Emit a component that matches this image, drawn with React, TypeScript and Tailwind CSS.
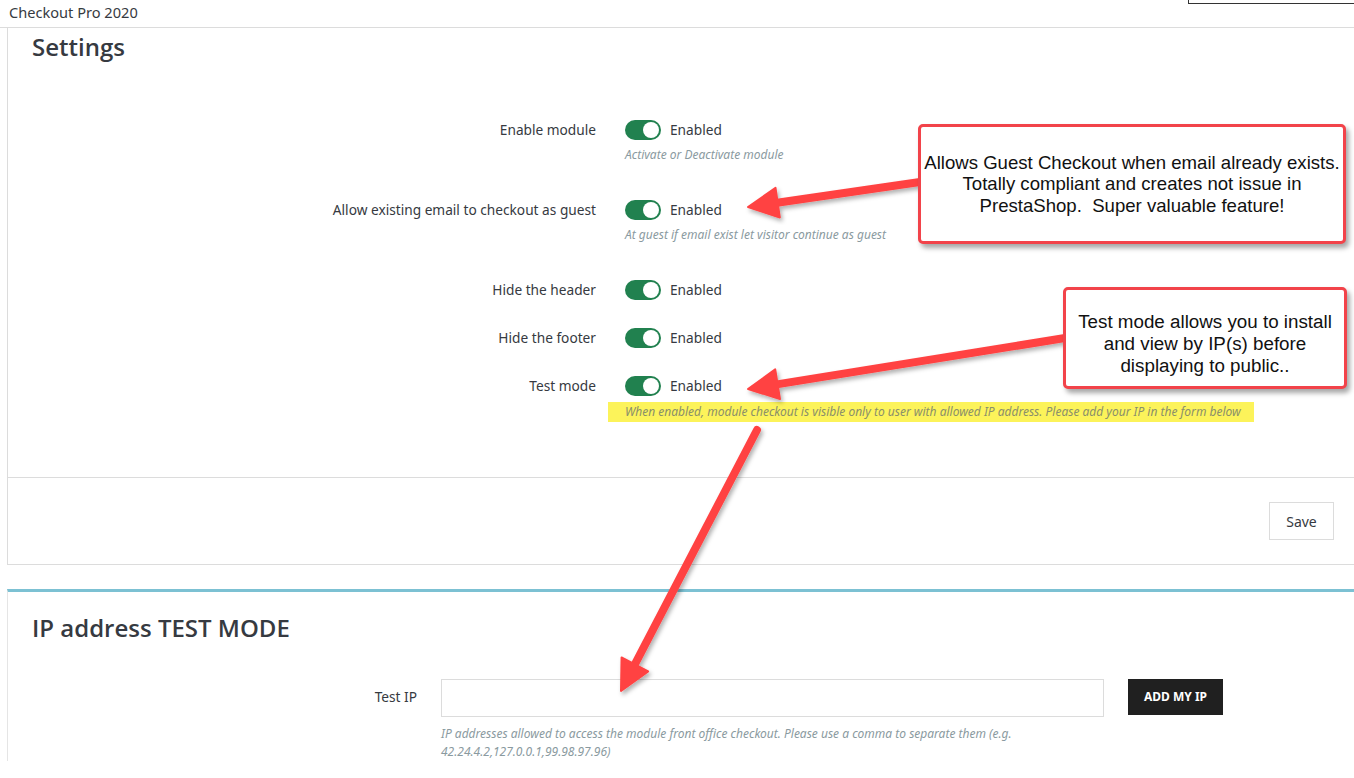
import React from "react";

const labelFont = { fontFamily: '"Noto Sans", sans-serif' };

const Toggle = () => (
  <div className="relative h-[20px] w-[36px] rounded-full bg-[#21814f]">
    <div className="absolute right-[2px] top-[2px] h-[16px] w-[16px] rounded-full bg-white" />
  </div>
);

const Row = ({ label, mt }: { label: string; mt: string }) => (
  <div className={`flex items-center ${mt}`}>
    <div className="w-[588px] text-right text-[13.7px] leading-[20px] text-[#363a41]">{label}</div>
    <div className="ml-[29px] flex items-center">
      <Toggle />
      <span className="ml-[9px] text-[13.7px] leading-[20px] text-[#363a41]">Enabled</span>
    </div>
  </div>
);

const Help = ({ children, mt }: { children: React.ReactNode; mt: string }) => (
  <div className={`${mt} ml-[617px] text-[12px] italic leading-[16px] text-[#8a9aa0]`}>{children}</div>
);

const Arrow = ({ x1, y1, x2, y2 }: { x1: number; y1: number; x2: number; y2: number }) => {
  const dx = x2 - x1;
  const dy = y2 - y1;
  const len = Math.hypot(dx, dy);
  const ux = dx / len;
  const uy = dy / len;
  const L = 30;
  const W = 15;
  const bx = x2 - ux * L;
  const by = y2 - uy * L;
  const px = -uy;
  const py = ux;
  const pts = `${x2},${y2} ${bx + px * W},${by + py * W} ${bx - px * W},${by - py * W}`;
  return (
    <g filter="url(#sh)">
      <line x1={x1} y1={y1} x2={bx + ux * 4} y2={by + uy * 4} stroke="#ff4343" strokeWidth={8} strokeLinecap="round" />
      <polygon points={pts} fill="#ff4343" strokeLinejoin="round" stroke="#ff4343" strokeWidth={2} />
    </g>
  );
};

export default function App() {
  return (
    <div className="relative h-[778px] w-[1354px] overflow-hidden bg-white" style={labelFont}>
      {/* top bar */}
      <div className="flex h-[28px] items-start justify-between border-b border-[#dcdcdc]">
        <div className="pl-[9px] pt-[2px] text-[14.6px] leading-[20px] text-[#363a41]">Checkout Pro 2020</div>
        <div className="h-[4px] w-[166px] border-b border-l border-[#333]" />
      </div>

      {/* settings panel */}
      <div className="ml-[7px] border-b border-l border-[#dcdcdc]">
        <h2
          className="pl-[24px] pt-[4px] text-[24px] font-semibold leading-[30px] text-[#363a41]"
          style={{ fontFamily: '"Open Sans", sans-serif' }}
        >
          Settings
        </h2>
        <Row label="Enable module" mt="mt-[58px]" />
        <Help mt="mt-[7px]">Activate or Deactivate module</Help>
        <Row label="Allow existing email to checkout as guest" mt="mt-[37px]" />
        <Help mt="mt-[7px]">At guest if email exist let visitor continue as guest</Help>
        <Row label="Hide the header" mt="mt-[37px]" />
        <Row label="Hide the footer" mt="mt-[28px]" />
        <Row label="Test mode" mt="mt-[28px]" />
        <div className="ml-[600px] mt-[6px] flex h-[20px] w-[646px] items-center bg-[#fcf35a] pl-[17px]">
          <span className="text-[12px] italic text-[#8a8f6a]">
            When enabled, module checkout is visible only to user with allowed IP address. Please add your IP in the form below
          </span>
        </div>
        <div className="mt-[55px] flex justify-end border-t border-[#dcdcdc] py-[24px] pr-[20px]">
          <button className="h-[38px] w-[65px] border border-[#dcdcdc] bg-white text-[14px] text-[#363a41]">Save</button>
        </div>
      </div>

      {/* ip panel */}
      <div className="ml-[7px] mt-[24px] border-l border-t-[3px] border-l-[#e5e5e5] border-t-[#7cc1d3]">
        <h2
          className="pl-[24px] pt-[21px] text-[24px] font-semibold leading-[30px] text-[#363a41]"
          style={{ fontFamily: '"Open Sans", sans-serif' }}
        >
          IP address TEST MODE
        </h2>
        <div className="mt-[36px] flex items-start">
          <div className="w-[409px] pt-[8px] text-right text-[13.7px] leading-[20px] text-[#363a41]">Test IP</div>
          <div className="ml-[24px] w-[663px]">
            <div className="h-[38px] border border-[#dcdcdc] bg-white" />
            <div className="mt-[8px] text-[12px] italic leading-[18px] text-[#8a9aa0]">
              IP addresses allowed to access the module front office checkout. Please use a comma to separate them (e.g.
              42.24.4.2,127.0.0.1,99.98.97.96)
            </div>
          </div>
          <button className="ml-[24px] h-[36px] w-[95px] bg-[#202020] text-[12px] font-bold text-white">ADD MY IP</button>
        </div>
      </div>

      {/* annotations */}
      <svg className="pointer-events-none absolute left-0 top-0" width={1354} height={778}>
        <defs>
          <filter id="sh" x="-20%" y="-20%" width="140%" height="140%">
            <feDropShadow dx="2" dy="3" stdDeviation="2" floodColor="#000" floodOpacity="0.3" />
          </filter>
        </defs>
        <Arrow x1={920} y1={182} x2={748} y2={207} />
        <Arrow x1={1065} y1={338} x2={748} y2={389} />
        <Arrow x1={757} y1={430} x2={621} y2={691} />
      </svg>

      <div
        className="absolute left-[918px] top-[124px] flex h-[120px] w-[428px] flex-col items-center justify-center rounded-[5px] border-[3px] border-[#f2434a] bg-white text-center text-[18.6px] leading-[21.5px] text-[#111] shadow-[3px_4px_5px_rgba(0,0,0,0.35)]"
        style={{ fontFamily: '"Liberation Sans", Arial, sans-serif' }}
      >
        <div className="whitespace-nowrap">Allows Guest Checkout when email already exists.</div>
        <div>Totally compliant and creates not issue in</div>
        <div>PrestaShop.&nbsp; Super valuable feature!</div>
      </div>

      <div
        className="absolute left-[1063px] top-[287px] flex h-[102px] w-[284px] flex-col items-center justify-center rounded-[5px] border-[3px] border-[#f2434a] bg-white pt-[12px] text-center text-[18.8px] leading-[22px] text-[#111] shadow-[3px_4px_5px_rgba(0,0,0,0.35)]"
        style={{ fontFamily: '"Liberation Sans", Arial, sans-serif' }}
      >
        <div className="whitespace-nowrap">Test mode allows you to install</div>
        <div>and view by IP(s) before</div>
        <div>displaying to public..</div>
      </div>
    </div>
  );
}
